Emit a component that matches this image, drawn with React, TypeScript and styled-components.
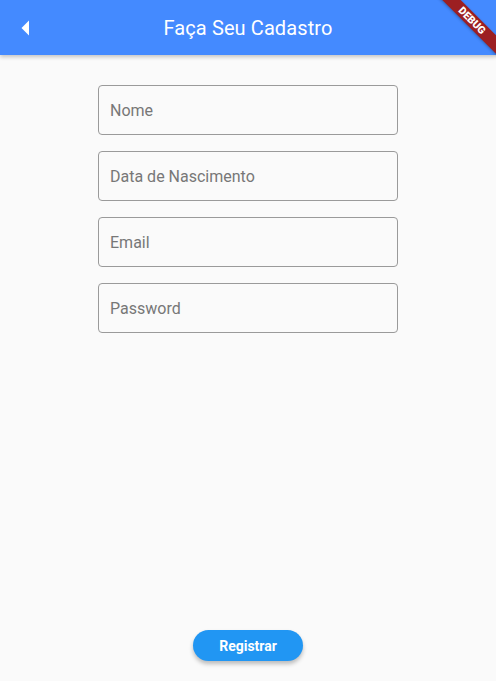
import styled, { createGlobalStyle } from "styled-components";

const GlobalStyle = createGlobalStyle`
  html, body {
    margin: 0;
    padding: 0;
    background: #fafafa;
    font-family: Roboto, "Liberation Sans", sans-serif;
  }
  #root {
    min-height: 100vh;
  }
`;

const Page = styled.div`
  position: relative;
  height: 681px;
  display: flex;
  flex-direction: column;
  background: #fafafa;
  overflow: hidden;
`;

const AppBar = styled.header`
  position: relative;
  height: 55px;
  flex-shrink: 0;
  background: #448aff;
  display: flex;
  align-items: center;
  justify-content: center;
  box-shadow: 0 2px 4px rgba(0, 0, 0, 0.22);
  z-index: 1;
`;

const BackButton = styled.button`
  position: absolute;
  left: 0;
  top: 0;
  width: 50px;
  height: 55px;
  border: 0;
  background: none;
  padding: 0;
  display: flex;
  align-items: center;
  justify-content: center;
  cursor: pointer;
`;

const Title = styled.h1`
  margin: 0;
  color: #fff;
  font-size: 20px;
  font-weight: 400;
  letter-spacing: 0.1px;
`;

const Form = styled.main`
  flex: 1;
  display: flex;
  flex-direction: column;
  align-items: center;
  gap: 16px;
  padding-top: 30px;
`;

const Field = styled.input`
  box-sizing: border-box;
  width: 300px;
  height: 50px;
  border: 1px solid #9a9a9a;
  border-radius: 4px;
  background: transparent;
  padding: 0 11px;
  font-family: Roboto, "Liberation Sans", sans-serif;
  font-size: 16px;
  color: #333;
  outline: none;

  &::placeholder {
    color: #777;
  }
`;

const Footer = styled.footer`
  display: flex;
  justify-content: center;
  padding-bottom: 20px;
`;

const RegisterButton = styled.button`
  width: 110px;
  height: 31px;
  border: 0;
  border-radius: 16px;
  background: #2196f3;
  color: #fff;
  font-family: Roboto, "Liberation Sans", sans-serif;
  font-size: 14px;
  font-weight: 700;
  box-shadow: 0 3px 4px rgba(0, 0, 0, 0.25);
  cursor: pointer;
`;

const DebugBanner = styled.div`
  position: absolute;
  top: 0;
  right: 0;
  width: 80px;
  height: 80px;
  overflow: hidden;
  pointer-events: none;
  z-index: 2;
`;

const BannerStrip = styled.div`
  position: absolute;
  top: 14px;
  right: -26px;
  width: 100px;
  height: 13px;
  background: #9c1f22;
  color: #fff;
  font-family: Roboto, "Liberation Sans", sans-serif;
  font-size: 10.5px;
  font-weight: 900;
  line-height: 13px;
  text-align: center;
  transform: rotate(45deg);
  box-shadow: 0 1px 3px rgba(0, 0, 0, 0.3);
`;

export default function App() {
  return (
    <Page>
      <GlobalStyle />
      <AppBar>
        <BackButton aria-label="Voltar">
          <svg width="10" height="16" viewBox="0 0 10 16">
            <path d="M9 0.5 L9 15.5 L1.5 8 Z" fill="#fff" />
          </svg>
        </BackButton>
        <Title>Faça Seu Cadastro</Title>
      </AppBar>
      <Form>
        <Field placeholder="Nome" />
        <Field placeholder="Data de Nascimento" />
        <Field placeholder="Email" />
        <Field placeholder="Password" type="password" />
      </Form>
      <Footer>
        <RegisterButton>Registrar</RegisterButton>
      </Footer>
      <DebugBanner>
        <BannerStrip>DEBUG</BannerStrip>
      </DebugBanner>
    </Page>
  );
}
